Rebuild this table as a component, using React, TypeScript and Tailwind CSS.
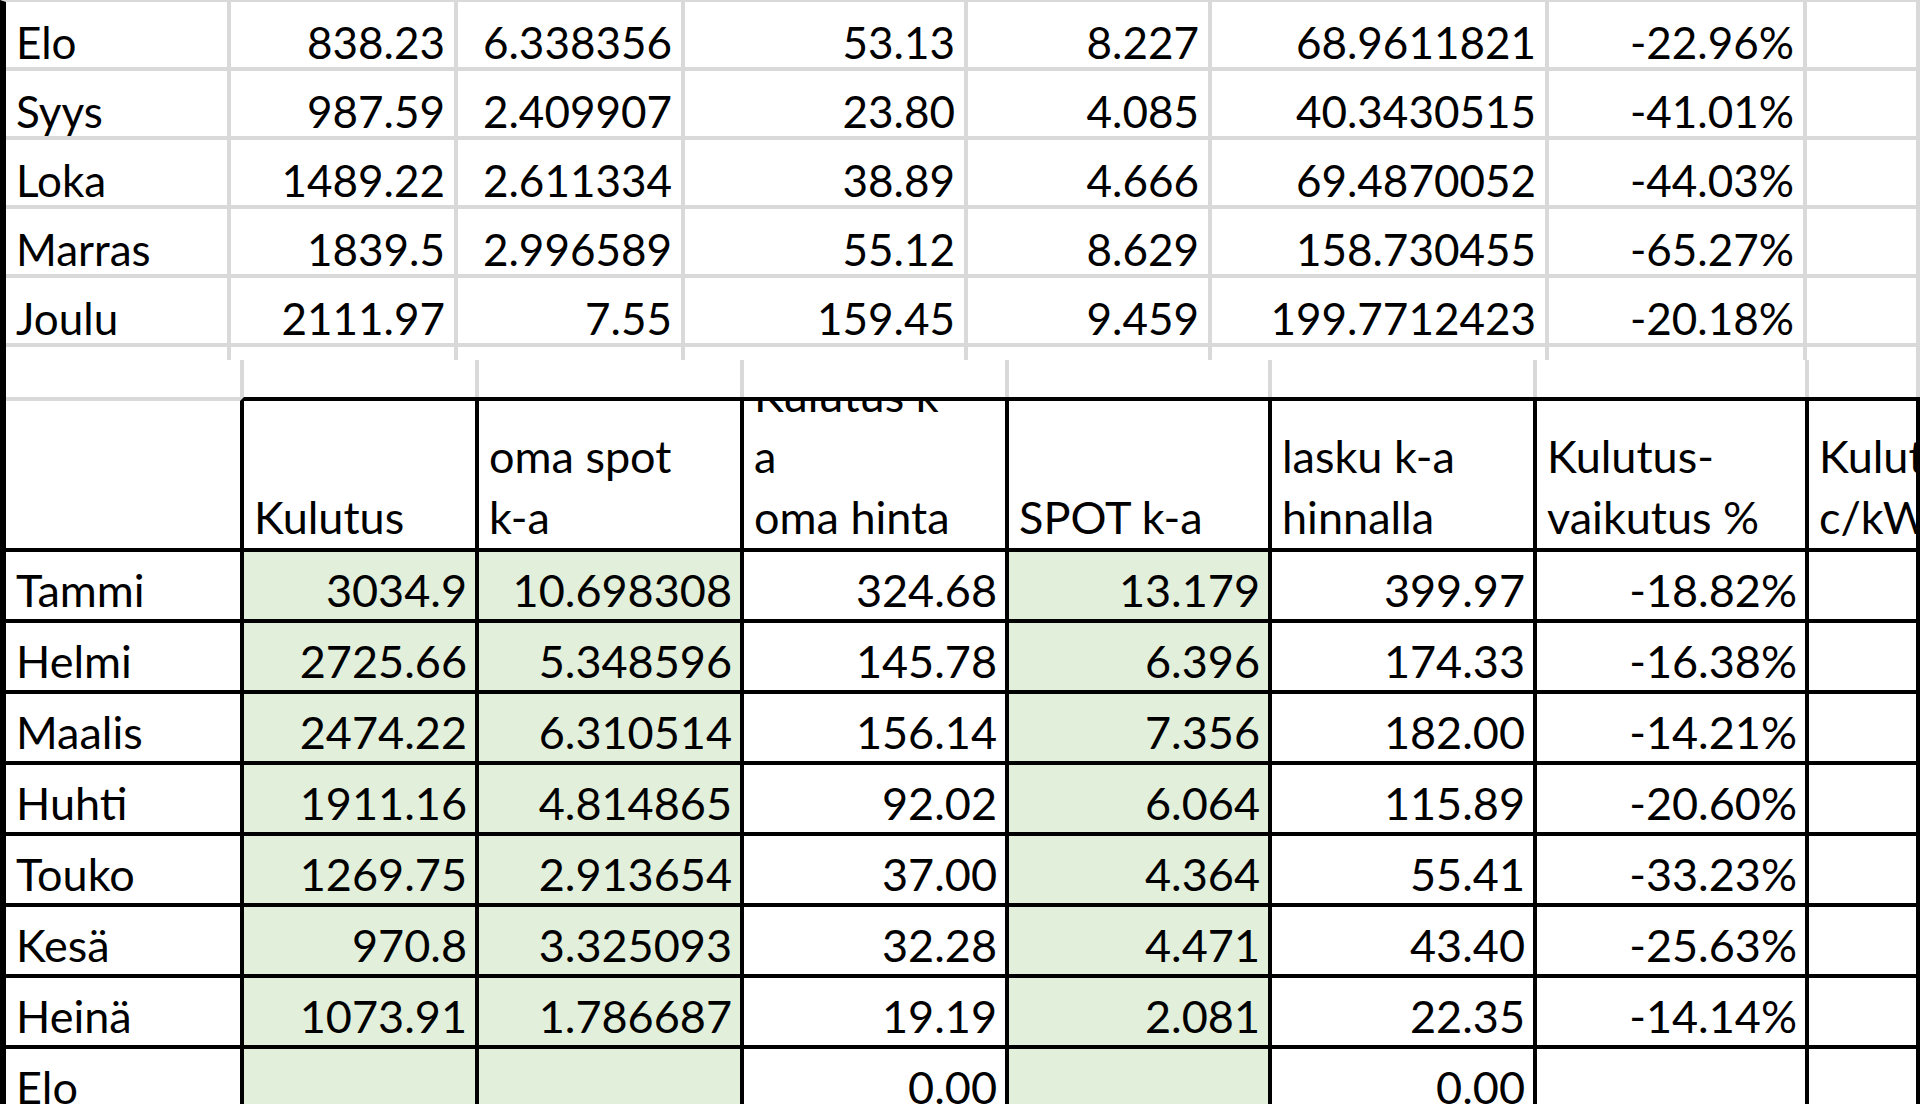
const topRows = [
  ["Elo", "838.23", "6.338356", "53.13", "8.227", "68.9611821", "-22.96%"],
  ["Syys", "987.59", "2.409907", "23.80", "4.085", "40.3430515", "-41.01%"],
  ["Loka", "1489.22", "2.611334", "38.89", "4.666", "69.4870052", "-44.03%"],
  ["Marras", "1839.5", "2.996589", "55.12", "8.629", "158.730455", "-65.27%"],
  ["Joulu", "2111.97", "7.55", "159.45", "9.459", "199.7712423", "-20.18%"],
];

const bottomRows = [
  ["Tammi", "3034.9", "10.698308", "324.68", "13.179", "399.97", "-18.82%"],
  ["Helmi", "2725.66", "5.348596", "145.78", "6.396", "174.33", "-16.38%"],
  ["Maalis", "2474.22", "6.310514", "156.14", "7.356", "182.00", "-14.21%"],
  ["Huhti", "1911.16", "4.814865", "92.02", "6.064", "115.89", "-20.60%"],
  ["Touko", "1269.75", "2.913654", "37.00", "4.364", "55.41", "-33.23%"],
  ["Kesä", "970.8", "3.325093", "32.28", "4.471", "43.40", "-25.63%"],
  ["Heinä", "1073.91", "1.786687", "19.19", "2.081", "22.35", "-14.14%"],
  ["Elo", "", "", "0.00", "", "0.00", ""],
];

const headers = [
  [],
  ["Kulutus"],
  ["oma spot", "k-a"],
  ["Kulutus k-", "a", "oma hinta"],
  ["SPOT k-a"],
  ["lasku k-a", "hinnalla"],
  ["Kulutus-", "vaikutus %"],
  ["Kulutus", "c/kWh"],
];

// columns 2, 3 and 5 are the green input cells
const green = [false, true, true, false, true, false, false, false];

function TopSheet() {
  return (
    <div className="border-l-[6px] border-t-2 border-black border-t-[#d9d9d9] grid grid-cols-[225px_227px_227px_283px_244px_337px_258px_1fr]">
      {topRows.map((row) =>
        [...row, ""].map((v, i) => (
          <div
            key={row[0] + i}
            className={`h-[69px] border-r-4 border-b-4 border-[#d9d9d9] flex items-end text-[44px] leading-[50px] whitespace-nowrap overflow-hidden ${
              i === 0 ? "pl-[10px]" : "justify-end pr-[9px]"
            }`}
          >
            {v}
          </div>
        ))
      )}
      {Array.from({ length: 8 }).map((_, i) => (
        <div key={"p" + i} className="h-[13px] border-r-4 border-[#d9d9d9]" />
      ))}
    </div>
  );
}

function BottomSheet() {
  return (
    <div className="border-l-[6px] border-black grid grid-cols-[238px_235px_265px_265px_263px_265px_272px_1fr]">
      {headers.map((_, i) => (
        <div key={"b" + i} className="h-[37px] border-r-4 border-[#d9d9d9]" />
      ))}
      {headers.map((lines, i) => (
        <div
          key={"h" + i}
          className={`h-[155px] border-r-4 border-b-4 border-t-4 border-black flex flex-col justify-end items-start pl-[10px] text-[45px] leading-[61px] whitespace-nowrap overflow-hidden ${
            i === 0 ? "border-t-[#d9d9d9]" : ""
          }`}
        >
          {lines.map((l) => (
            <div key={l}>{l}</div>
          ))}
        </div>
      ))}
      {bottomRows.map((row) =>
        [...row, ""].map((v, i) => (
          <div
            key={row[0] + i}
            className={`h-[71px] border-r-4 border-b-4 border-black flex items-end pb-[2px] text-[45px] leading-[53px] whitespace-nowrap overflow-hidden ${
              i === 0 ? "pl-[10px]" : "justify-end pr-[8px]"
            } ${green[i] ? "bg-[#e2efda]" : "bg-white"}`}
          >
            {v}
          </div>
        ))
      )}
    </div>
  );
}

export default function App() {
  return (
    <div className="w-[1920px] h-[1104px] overflow-hidden bg-white text-black font-['Lato','Open_Sans',sans-serif]">
      <TopSheet />
      <BottomSheet />
    </div>
  );
}
